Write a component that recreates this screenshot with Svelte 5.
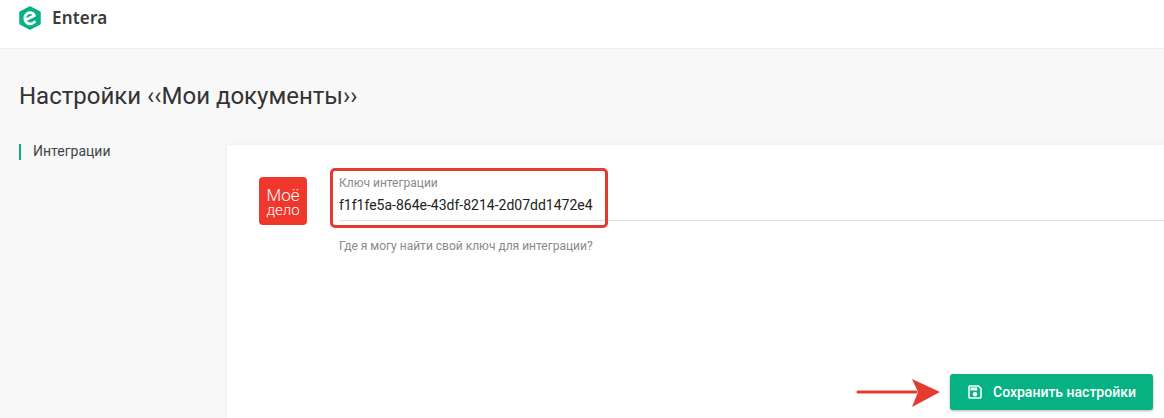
<script>
	let integrationKey = $state('f1f1fe5a-864e-43df-8214-2d07dd1472e4');
</script>

<div class="page">
	<header class="topbar">
		<svg class="logo" viewBox="0 0 22 24" width="22" height="24">
			<path d="M11 0.8 L21 6.2 V17.8 L11 23.2 L1 17.8 V6.2 Z" fill="#06b283" stroke="#06b283" stroke-width="1.5" stroke-linejoin="round" />
			<path d="M6.6 14 L15.6 9.6 C14.6 6.6 10.8 5.8 8.4 7.4 C5.4 9.4 5 14 7.4 16.4 C9.6 18.4 13 18 15.6 16" fill="none" stroke="#fff" stroke-width="2.8" stroke-linecap="round" stroke-linejoin="round" />
		</svg>
		<span class="brand">Entera</span>
	</header>

	<main class="content">
		<h1>Настройки ‹‹Мои документы››</h1>
		<div class="columns">
			<nav class="side">
				<span class="side-item">Интеграции</span>
			</nav>
			<section class="card">
				<div class="row">
					<div class="partner">
						<span class="top">Моё</span>
						<span class="bottom">дело</span>
					</div>
					<div class="field">
						<label for="key">Ключ интеграции</label>
						<input id="key" type="text" bind:value={integrationKey} />
						<p class="help">Где я могу найти свой ключ для интеграции?</p>
						<div class="highlight"></div>
					</div>
				</div>
				<div class="actions">
					<svg class="arrow" viewBox="0 0 84 36" width="84" height="36">
						<path d="M2 18 H60" stroke="#e53a2f" stroke-width="3" stroke-linecap="round" />
						<path d="M56 5 L84 18 L56 33 L62 18 Z" fill="#e53a2f" />
					</svg>
					<button type="button">
						<svg viewBox="0 0 24 24" width="18" height="18">
							<path fill="#fff" d="M17 3H5a2 2 0 0 0-2 2v14a2 2 0 0 0 2 2h14a2 2 0 0 0 2-2V7l-4-4zm2 16H5V5h11.17L19 7.83V19zm-7-7a3 3 0 1 0 0 6 3 3 0 0 0 0-6zM6 6h9v4H6z" />
						</svg>
						Сохранить настройки
					</button>
				</div>
			</section>
		</div>
	</main>
</div>

<style>
	:global(body) {
		margin: 0;
		background: #f8f8f8;
	}

	.page {
		height: 418px;
		overflow: hidden;
		font-family: Roboto, 'Liberation Sans', sans-serif;
		color: #333;
	}

	.topbar {
		height: 42px;
		display: flex;
		align-items: flex-start;
		padding: 6px 0 0 19px;
		background: #fff;
		border-bottom: 1px solid #eee;
	}

	.logo {
		display: block;
	}

	.brand {
		margin-left: 11px;
		font-family: 'Noto Sans', sans-serif;
		font-size: 17px;
		font-weight: 600;
		line-height: 24px;
		letter-spacing: 0.2px;
		color: #3a3a3a;
	}

	.content {
		padding-left: 19px;
	}

	h1 {
		margin: 0;
		padding-top: 32px;
		font-size: 24px;
		font-weight: 400;
		line-height: 30px;
		color: #333;
	}

	.columns {
		display: flex;
		margin-top: 34px;
	}

	.side {
		width: 208px;
		flex: none;
	}

	.side-item {
		display: block;
		height: 16px;
		margin-top: -1px;
		padding-left: 12px;
		border-left: 2px solid #06b283;
		font-size: 14px;
		line-height: 14px;
		color: #444;
	}

	.card {
		flex: 1;
		height: 273px;
		box-sizing: border-box;
		padding: 32px 11px 0 32px;
		background: #fff;
		box-shadow: 0 0 6px rgba(0, 0, 0, 0.05);
	}

	.row {
		display: flex;
		gap: 32px;
		margin-right: -11px;
	}

	.partner {
		flex: none;
		width: 48px;
		height: 48px;
		box-sizing: border-box;
		padding-top: 10px;
		border-radius: 4px;
		background: #f0372b;
		color: #fff;
		font-family: Roboto, sans-serif;
		font-weight: 300;
		text-align: center;
	}

	.partner span {
		display: block;
	}

	.top {
		font-size: 17px;
		line-height: 16px;
	}

	.bottom {
		font-size: 15px;
		line-height: 15px;
	}

	.field {
		flex: 1;
		position: relative;
	}

	label {
		display: block;
		margin-top: -1px;
		font-size: 12px;
		line-height: 14px;
		color: #8a8a8a;
	}

	input {
		display: block;
		width: 100%;
		box-sizing: border-box;
		height: 31px;
		padding: 0;
		border: none;
		border-bottom: 1px solid #ddd;
		outline: none;
		background: none;
		font: 14px Roboto, sans-serif;
		color: #222;
	}

	.help {
		margin: 17px 0 0;
		font-size: 12px;
		line-height: 16px;
		color: #8a8a8a;
	}

	.highlight {
		position: absolute;
		left: -9px;
		top: -9px;
		width: 278px;
		height: 60px;
		box-sizing: border-box;
		border: 3px solid #e53a2f;
		border-radius: 5px;
		pointer-events: none;
	}

	.actions {
		display: flex;
		justify-content: flex-end;
		align-items: center;
		gap: 10px;
		margin-top: 120px;
	}

	.arrow {
		display: block;
	}

	button {
		display: flex;
		align-items: center;
		gap: 9px;
		width: 203px;
		height: 36px;
		padding: 0 0 0 16px;
		border: none;
		border-radius: 3px;
		background: #06b283;
		box-shadow: 0 1px 3px rgba(0, 0, 0, 0.3);
		color: #fff;
		font: 500 14px Roboto, sans-serif;
	}
</style>
